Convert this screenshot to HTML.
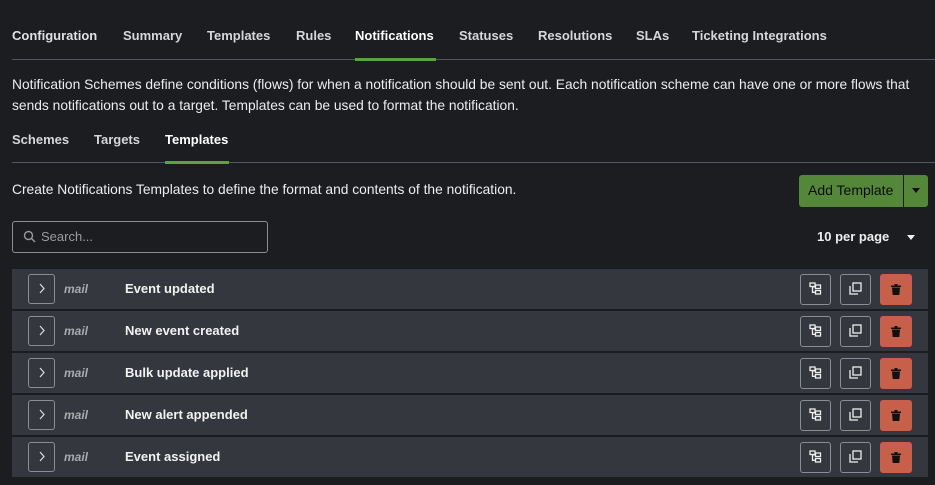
<!DOCTYPE html>
<html><head><style>
*{box-sizing:border-box;margin:0;padding:0}
body{width:935px;height:485px;background:#1b1d21;font-family:"Liberation Sans",sans-serif;color:#e8e9ea;position:relative;overflow:hidden}
.a{position:absolute}
.tab{position:absolute;top:28px;font-size:13px;font-weight:bold;color:#d6d7d9}
.tab.on{color:#fff}
.line{position:absolute;left:12px;right:0;height:1px;background:#55585e}
.ul{position:absolute;height:3px;background:#5ca13a}
.row{position:absolute;left:12px;width:916px;height:40px;background:#34373d}
.ex{position:absolute;left:16px;top:5px;width:27px;height:30px;border:1px solid #8a8d92;border-radius:3px}
.mail{position:absolute;left:52px;top:13px;font-size:12px;font-style:italic;font-weight:bold;color:#a9abaf}
.nm{position:absolute;left:113px;top:12px;font-size:13px;font-weight:bold;color:#f2f2f2}
.ib{position:absolute;top:5px;width:31px;height:31px;border:1px solid #8a8d92;border-radius:3px}
.del{position:absolute;left:868px;top:5px;width:32px;height:31px;background:#c6604a;border-radius:3px}
</style></head><body>
<div class="tab" style="left:12px;color:#e0e1e3">Configuration</div>
<div class="tab" style="left:123px">Summary</div>
<div class="tab" style="left:207px">Templates</div>
<div class="tab" style="left:296px">Rules</div>
<div class="tab on" style="left:355px">Notifications</div>
<div class="tab" style="left:459px">Statuses</div>
<div class="tab" style="left:538px">Resolutions</div>
<div class="tab" style="left:636px">SLAs</div>
<div class="tab" style="left:692px">Ticketing Integrations</div>
<div class="line" style="top:59px"></div>
<div class="ul" style="left:355px;width:81px;top:58px"></div>
<div class="a" style="left:12px;top:74px;width:912px;font-size:13.8px;line-height:21px;color:#eceded">Notification Schemes define conditions (flows) for when a notification should be sent out. Each notification scheme can have one or more flows that sends notifications out to a target. Templates can be used to format the notification.</div>
<div class="tab" style="left:12px;top:132px">Schemes</div>
<div class="tab" style="left:94px;top:132px">Targets</div>
<div class="tab on" style="left:165px;top:132px">Templates</div>
<div class="line" style="top:162px"></div>
<div class="ul" style="left:165px;width:64px;top:161px"></div>
<div class="a" style="left:12px;top:182px;font-size:13.8px;color:#eceded">Create Notifications Templates to define the format and contents of the notification.</div>
<div class="a" style="left:799px;top:175px;width:129px;height:32px;background:#54873a;border-radius:3px"></div>
<div class="a" style="left:808px;top:182px;font-size:14px;color:#0c0c0c">Add Template</div>
<div class="a" style="left:903px;top:175px;width:1px;height:32px;background:#1b1d21"></div>
<svg class="a" style="left:912px;top:188px" width="8" height="5"><path d="M0 0H8L4 5Z" fill="#111"/></svg>
<div class="a" style="left:12px;top:221px;width:256px;height:32px;border:1px solid #8a8d92;border-radius:3px"></div>
<svg class="a" style="left:23px;top:230px" width="13" height="13" viewBox="0 0 13 13"><circle cx="5.5" cy="5.5" r="4" fill="none" stroke="#999" stroke-width="1.4"/><path d="M8.5 8.5L12 12" stroke="#999" stroke-width="1.4"/></svg>
<div class="a" style="left:41px;top:229px;font-size:13px;color:#9a9ca0">Search...</div>
<div class="a" style="left:817px;top:229px;font-size:13px;font-weight:bold;color:#eee">10 per page</div>
<svg class="a" style="left:907px;top:235px" width="8" height="5"><path d="M0 0H8L4 5Z" fill="#eee"/></svg>

<div class="row" style="top:269px"><div class="ex"></div><div class="mail">mail</div><div class="nm">Event updated</div><div class="ib" style="left:788px"></div><div class="ib" style="left:828px"></div><div class="del"></div></div>
<div class="row" style="top:311px"><div class="ex"></div><div class="mail">mail</div><div class="nm">New event created</div><div class="ib" style="left:788px"></div><div class="ib" style="left:828px"></div><div class="del"></div></div>
<div class="row" style="top:353px"><div class="ex"></div><div class="mail">mail</div><div class="nm">Bulk update applied</div><div class="ib" style="left:788px"></div><div class="ib" style="left:828px"></div><div class="del"></div></div>
<div class="row" style="top:395px"><div class="ex"></div><div class="mail">mail</div><div class="nm">New alert appended</div><div class="ib" style="left:788px"></div><div class="ib" style="left:828px"></div><div class="del"></div></div>
<div class="row" style="top:437px"><div class="ex"></div><div class="mail">mail</div><div class="nm">Event assigned</div><div class="ib" style="left:788px"></div><div class="ib" style="left:828px"></div><div class="del"></div></div>

<svg class="a" style="left:0;top:0" width="935" height="485">
<defs>
<g id="fl" fill="none" stroke="#eee" stroke-width="1.3"><rect x="0" y="0" width="5" height="3.5"/><rect x="5.5" y="2" width="5" height="3.5"/><rect x="5.5" y="7.5" width="5" height="3.5"/><path d="M2.5 3.5V9.3H5.5M2.5 3.8H5.5"/></g>
<g id="cp" fill="none" stroke="#eee" stroke-width="1.3"><rect x="3" y="0" width="8" height="8"/><path d="M0 3V11H8"/></g>
<g id="tr" fill="#111"><rect x="0" y="1.5" width="10" height="1.5"/><rect x="3.5" y="0" width="3" height="1.5"/><path d="M1 3.5H9L8.3 11H1.7Z"/></g>
<g id="ch"><path d="M0 0L4 4.5L0 9" fill="none" stroke="#ddd" stroke-width="1.2"/></g>
</defs>
<use href="#ch" x="40" y="284"/><use href="#ch" x="40" y="326"/><use href="#ch" x="40" y="368"/><use href="#ch" x="40" y="410"/><use href="#ch" x="40" y="452"/>
<use href="#fl" x="810" y="283"/><use href="#cp" x="850" y="283"/><use href="#tr" x="891" y="284"/>
<use href="#fl" x="810" y="325"/><use href="#cp" x="850" y="325"/><use href="#tr" x="891" y="326"/>
<use href="#fl" x="810" y="367"/><use href="#cp" x="850" y="367"/><use href="#tr" x="891" y="368"/>
<use href="#fl" x="810" y="409"/><use href="#cp" x="850" y="409"/><use href="#tr" x="891" y="410"/>
<use href="#fl" x="810" y="451"/><use href="#cp" x="850" y="451"/><use href="#tr" x="891" y="452"/>
</svg>
</body></html>
